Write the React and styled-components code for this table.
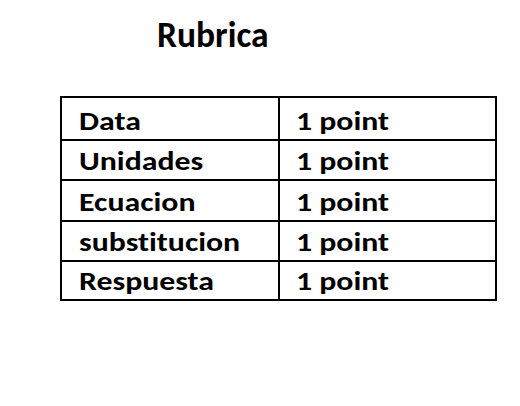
import React from "react";
import styled, { createGlobalStyle } from "styled-components";

const Global = createGlobalStyle`
  html, body { margin: 0; padding: 0; background: #fff; }
  body {
    font-family: Carlito, "Open Sans", "Liberation Sans", sans-serif;
    color: #000;
    font-variant-ligatures: none;
  }
`;

const Page = styled.div`
  width: 520px;
  height: 406px;
  padding: 14px 0 0 60px;
  box-sizing: border-box;
`;

const Title = styled.h1`
  margin: 0 0 0 97px;
  font-size: 35.5px;
  font-weight: 700;
  line-height: 42px;
  height: 82px;
`;

const Table = styled.div`
  width: 437px;
  border: 2px solid #000;
  box-sizing: border-box;
  display: grid;
  grid-template-columns: 216px 1fr;
`;

const Cell = styled.div`
  height: ${(p) => p.$h}px;
  box-sizing: border-box;
  border-top: ${(p) => (p.$first ? "none" : "2px solid #000")};
  border-left: ${(p) => (p.$right ? "2px solid #000" : "none")};
  padding-left: ${(p) => (p.$right ? 16 : 17)}px;
  font-size: 26.5px;
  font-weight: 700;
  line-height: 26px;
  display: flex;
  align-items: flex-end;
  padding-bottom: 5px;
  white-space: nowrap;
  font-variant-ligatures: none;
`;

const Stretch = styled.span`
  display: inline-block;
  transform: scaleX(1.2);
  transform-origin: left bottom;
`;

const rows = [
  ["Data", 41],
  ["Unidades", 40],
  ["Ecuacion", 41],
  ["substitucion", 40],
  ["Respuesta", 39],
];

export default function App() {
  return (
    <>
      <Global />
      <Page>
        <Title>Rubrica</Title>
        <Table>
          {rows.map(([label, h], i) => (
            <React.Fragment key={label}>
              <Cell $h={h} $first={i === 0}><Stretch>{label}</Stretch></Cell>
              <Cell $h={h} $first={i === 0} $right><Stretch>1 point</Stretch></Cell>
            </React.Fragment>
          ))}
        </Table>
      </Page>
    </>
  );
}
